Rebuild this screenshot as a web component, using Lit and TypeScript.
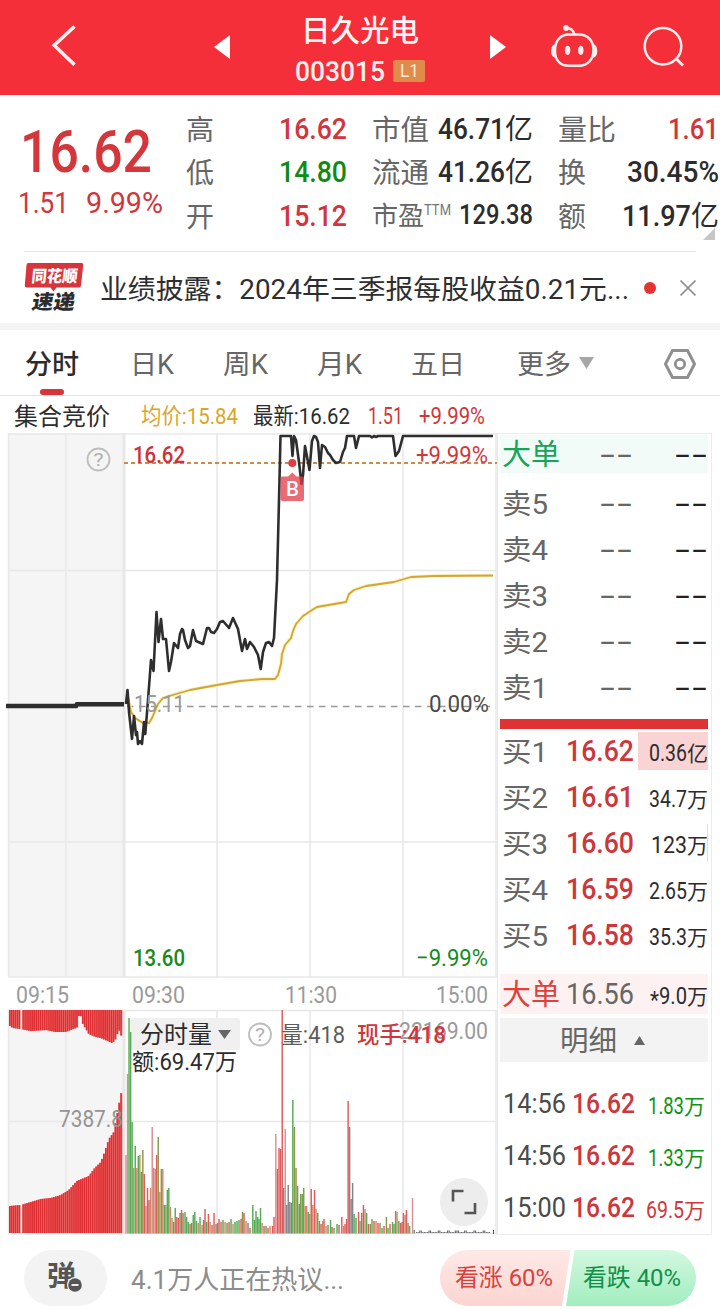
import { LitElement, html, svg, css, nothing } from "lit";
import { customElement } from "lit/decorators.js";

type Pt = [number, number];

const RED = "#d0363c";
const GREEN = "#0f8a12";
const DARK = "#2c2c2e";
const GREY = "#666";
const MUTE = "#9a9a9a";

/** In-flow text set to an exact advance width. */
const fit = (text: string, w: number, size: number, fill: string, weight = 400, mid = 0.32) => html`
  <svg class="fit" width=${w} height=${size} role="text">
    <text x="0" y=${size / 2 + size * mid} font-size=${size} fill=${fill} font-weight=${weight}
      textLength=${w} lengthAdjust="spacingAndGlyphs">${text}</text>
  </svg>`;
const cjk = (text: string, w: number, size: number, fill: string, weight = 400) =>
  fit(text, w, size, fill, weight, 0.36);

/** Text on the chart canvas: x is the left edge, cy the vertical middle of the digits. */
const label = (x: number, cy: number, text: string, w: number, size: number, fill: string, weight = 400) => svg`
  <text x=${x} y=${cy + size * 0.33} font-size=${size} fill=${fill} font-weight=${weight}
    textLength=${w} lengthAdjust="spacingAndGlyphs">${text}</text>`;

const poly = (pts: Pt[]) => pts.map((p) => p.join(",")).join(" ");

const lerp = (pts: Pt[], x: number) => {
  for (let i = 1; i < pts.length; i++) {
    const [x0, y0] = pts[i - 1];
    const [x1, y1] = pts[i];
    if (x <= x1) return y0 + ((y1 - y0) * (x - x0)) / (x1 - x0);
  }
  return pts[pts.length - 1][1];
};

const PRICE: Pt[] = [
  [126, 704], [127.5, 690], [129, 712], [132, 739], [134, 716], [136, 735], [137, 732], [138, 744], [140, 741],
  [142, 744], [144, 722], [145.3, 734], [148, 700], [151, 660], [153.5, 671], [156.5, 612], [158.5, 642],
  [161, 619], [163, 639], [166, 639], [169, 671], [171, 662], [174, 643], [178, 648], [180, 634], [182, 629],
  [183, 630], [185, 640], [188, 648], [190, 646], [193, 630], [196, 641], [203, 644], [205, 636], [207, 628], [209, 628],
  [211, 632], [214, 633], [217, 629], [220, 622], [223, 621], [229, 628], [233, 618], [238, 629], [242, 651], [245, 639],
  [247, 649], [250, 642], [254, 647], [258, 655], [260.7, 669], [263, 652], [266, 643], [269, 642], [272, 646],
  [274, 638], [277, 580], [279, 500], [280.5, 436], [291, 436], [292.5, 456], [294, 436], [296, 440],
  [299, 462], [301.5, 484], [303, 475], [305, 446], [309.5, 470], [312, 441], [314, 436], [316, 437], [318, 442],
  [320, 468], [322, 445], [325, 447], [328, 453], [330, 455], [333, 460], [336, 463], [340, 462], [343, 452], [345, 448],
  [347, 436], [354, 436], [356, 448], [359, 436], [370, 436], [372, 437.5], [374, 436], [376, 437], [378, 436],
  [393, 436], [395.5, 456], [399, 451], [403, 436], [493, 436],
];

const AVERAGE: Pt[] = [
  [127, 690], [129, 702], [131, 712], [135, 718], [143, 723], [149, 723], [152, 718], [155, 711], [158, 704],
  [163, 698], [176, 694], [190, 690], [217, 685], [240, 681], [262, 679], [275, 679], [278, 675], [281, 664],
  [282, 654], [285, 645], [291, 638], [293, 631], [296, 624], [303, 616], [312, 610], [317, 607], [346, 602],
  [349, 594], [354, 590], [366, 586], [394, 582], [411, 577], [433, 576], [493, 575.5],
];

const AUCTION_TOP: Pt[] = [
  [9, 1026], [12, 1028], [20, 1029], [30, 1031], [45, 1030], [55, 1032], [65, 1032], [75, 1028], [77, 1027],
  [78, 1016], [80, 1016], [82, 1024], [88, 1034], [95, 1037], [100, 1038], [111, 1043], [114, 1041],
  [118, 1030], [120, 1033], [121, 1040], [122, 1048],
];

const AUCTION_BOTTOM: Pt[] = [
  [9, 1206], [20, 1205], [30, 1202], [40, 1199], [50, 1198], [60, 1195], [68, 1190], [76, 1181], [88, 1176],
  [93, 1169], [100, 1162], [103, 1154], [108, 1139], [113, 1132], [118, 1105], [120, 1095], [122, 1085],
];

const TONE: Record<string, string> = {
  r: "#df5c5c", p: "#d98f95", g: "#57ab55", s: "#d28a66", k: "#85858a", o: "#8f9548",
};

const VOLUME: [number, number, string][] = [
  [126, 1155, "p"], [127.5, 1074, "p"], [129, 1018, "g"], [130.6, 1032, "g"], [132.1, 1122, "g"], [133.6, 1168, "s"],
  [135.2, 1146, "g"], [136.8, 1168, "s"], [138.3, 1156, "g"], [139.8, 1155, "s"], [141.3, 1172, "g"], [142.8, 1150, "o"],
  [144.3, 1174, "r"], [145.9, 1206, "s"], [147.5, 1188, "r"], [149, 1200, "r"], [150.6, 1188, "s"], [152.2, 1127, "p"],
  [153.7, 1168, "s"], [155.2, 1169, "s"], [156.7, 1155, "r"], [158.2, 1137, "o"], [159.8, 1192, "s"], [161.3, 1169, "o"],
  [162.8, 1169, "s"], [164.3, 1205, "g"], [165.8, 1205, "s"], [167.3, 1190, "g"], [168.8, 1188, "g"], [170.4, 1207, "s"],
  [172, 1218, "s"], [173.6, 1222, "r"], [175.2, 1208, "g"], [176.8, 1217, "r"], [178.4, 1218, "r"], [180, 1213, "g"],
  [181.5, 1210, "r"], [183, 1213, "r"], [185, 1212, "g"], [186.6, 1217, "g"], [188.2, 1222, "g"], [190, 1224, "r"],
  [191.6, 1223, "r"], [193.2, 1215, "g"], [194.8, 1212, "g"], [196.5, 1221, "g"], [198.2, 1223, "s"], [200, 1217, "g"],
  [202, 1225, "s"], [203.5, 1220, "r"], [205, 1209, "r"], [206.7, 1222, "g"], [208.4, 1214, "r"], [210, 1222, "s"],
  [212, 1225, "r"], [214, 1213, "r"], [216, 1224, "g"], [217.5, 1223, "r"], [219, 1219, "r"], [221, 1222, "r"],
  [223, 1220, "g"], [225, 1222, "s"], [227, 1223, "g"], [229, 1222, "r"], [231, 1219, "g"], [233, 1224, "s"],
  [235, 1222, "g"], [237, 1221, "g"], [239, 1220, "g"], [241, 1219, "r"], [242.5, 1212, "o"], [244, 1213, "r"],
  [246, 1221, "s"], [248, 1223, "k"], [250, 1228, "r"], [252.8, 1205, "g"], [254.5, 1220, "g"], [256, 1211, "g"],
  [257.6, 1217, "g"], [259, 1219, "g"], [260.5, 1208, "g"], [262, 1223, "s"], [264, 1226, "r"], [266, 1226, "g"],
  [268, 1228, "r"], [270, 1226, "s"], [272.5, 1226, "r"], [274, 1217, "r"], [275.8, 1134, "p"], [277.4, 1169, "r"],
  [279, 1148, "r"], [280.6, 1149, "r"], [282.2, 1010, "r"], [283.7, 1188, "k"], [285.2, 1129, "p"], [286.7, 1205, "k"],
  [288.2, 1185, "k"], [289.8, 1202, "k"], [291.3, 1203, "k"], [292.8, 1100, "g"], [294.4, 1127, "o"], [296, 1168, "o"],
  [297.6, 1186, "g"], [299.2, 1204, "g"], [300.7, 1194, "o"], [302.2, 1194, "g"], [303.7, 1188, "o"], [305.2, 1206, "s"],
  [306.7, 1206, "s"], [308.2, 1212, "g"], [309.7, 1214, "s"], [311.2, 1189, "r"], [312.8, 1205, "s"], [314.5, 1190, "r"],
  [316, 1209, "s"], [317.7, 1213, "g"], [319.4, 1221, "g"], [321, 1224, "r"], [322.6, 1221, "s"], [324, 1219, "r"],
  [326, 1226, "s"], [328, 1225, "g"], [330.5, 1220, "g"], [332, 1227, "r"], [334, 1228, "g"], [337, 1224, "g"],
  [339, 1225, "r"], [341.8, 1217, "r"], [343.5, 1226, "s"], [345, 1224, "r"], [346.6, 1219, "r"], [348.1, 1101, "r"],
  [349.6, 1127, "k"], [351.1, 1199, "k"], [352.6, 1183, "k"], [354.1, 1214, "g"], [356, 1218, "g"], [358.5, 1212, "r"],
  [360, 1221, "g"], [361.7, 1213, "r"], [363.4, 1205, "r"], [365, 1209, "s"], [366.6, 1213, "g"], [368.4, 1224, "r"],
  [370.3, 1224, "g"], [372, 1219, "o"], [374, 1221, "r"], [376, 1221, "s"], [378, 1223, "r"], [380, 1223, "o"],
  [382, 1228, "g"], [384, 1226, "r"], [386.4, 1217, "o"], [388, 1228, "g"], [390, 1224, "r"], [392.5, 1222, "g"],
  [394, 1224, "g"], [395.6, 1211, "o"], [397, 1212, "s"], [398.8, 1221, "g"], [400.5, 1223, "r"], [402, 1222, "r"],
  [403.4, 1213, "r"], [405, 1215, "s"], [406.4, 1210, "r"], [408, 1223, "o"], [409.6, 1226, "g"], [412.5, 1198, "p"],
  [414.2, 1230, "k"],
];

const QUOTE = [
  [
    { k: "高", kw: 28, v: "16.62", w: 68, c: RED, u: "" },
    { k: "低", kw: 28, v: "14.80", w: 68, c: GREEN, u: "" },
    { k: "开", kw: 28, v: "15.12", w: 68, c: RED, u: "" },
  ],
  [
    { k: "市值", kw: 57, v: "46.71", w: 67, c: DARK, u: "亿" },
    { k: "流通", kw: 57, v: "41.26", w: 67, c: DARK, u: "亿" },
    { k: "市盈", kw: 52, v: "129.38", w: 74, c: DARK, u: "" },
  ],
  [
    { k: "量比", kw: 58, v: "1.61", w: 51, c: RED, u: "" },
    { k: "换", kw: 28, v: "30.45%", w: 92, c: DARK, u: "" },
    { k: "额", kw: 28, v: "11.97", w: 69, c: DARK, u: "亿" },
  ],
];

const BIDS = [
  { p: "16.62", q: "0.36", w: 38, u: "亿", share: 70 },
  { p: "16.61", q: "34.7", w: 38, u: "万", share: 0 },
  { p: "16.60", q: "123", w: 36, u: "万", share: 1.5 },
  { p: "16.59", q: "2.65", w: 38, u: "万", share: 0 },
  { p: "16.58", q: "35.3", w: 38, u: "万", share: 0 },
];

const TRADES = [
  { t: "14:56", q: "1.83", w: 36, c: "#0e9414" },
  { t: "14:56", q: "1.33", w: 36, c: "#0e9414" },
  { t: "15:00", q: "69.5", w: 38, c: RED },
];

const sharedText = css`
  :host { display: block; font-family: Roboto, "Noto Sans CJK SC", sans-serif; }
  svg { display: block; flex: none; overflow: visible; font-family: Roboto, "Noto Sans CJK SC", sans-serif; }
`;

@customElement("title-bar")
class TitleBar extends LitElement {
  static styles = [sharedText, css`
    .bar { height: 95px; background: #f42f39; display: flex; align-items: flex-start; }
    .back { margin: 24px 0 0 51px; }
    .prev { margin: 35px 0 0 137px; }
    .name { width: 260px; display: flex; flex-direction: column; align-items: center; padding-top: 16px; }
    .code { display: flex; gap: 8px; margin-top: 12px; align-items: center; }
    .badge { width: 32px; height: 22px; border-radius: 2px; background: #e08b4c; display: flex; align-items: center; justify-content: center; }
    .next { margin: 35px 0 0 0; }
    .bot { margin: 22px 0 0 44px; }
    .search { margin: 24px 0 0 45px; }
  `];
  render() {
    return html`<div class="bar">
      <svg class="back" width="26" height="43"><path d="M23.5 2.5L3.2 21.3L23.5 40.8" fill="none" stroke="#fff0ee" stroke-width="3.6"/></svg>
      <svg class="prev" width="16" height="24"><path d="M16 0V24L0 12Z" fill="#fff"/></svg>
      <div class="name">
        ${cjk("日久光电", 118, 29.5, "#fff4f2", 500)}
        <div class="code">${fit("003015", 90, 27, "#fff0ee", 500, 0.35)}<span class="badge">${fit("L1", 19, 18, "#ffe9d2", 400, 0.35)}</span></div>
      </div>
      <svg class="next" width="16" height="24"><path d="M0 0V24L16 12Z" fill="#fff"/></svg>
      <svg class="bot" width="48" height="48" viewBox="550 22 48 48">
        <g fill="none" stroke="#fff0ee" stroke-width="2.5">
          <path d="M569 34.5H579C588 34.5 593.5 41 593.5 50S588 65.8 579 65.8H569C560 65.8 555 60 555 50.5S560 34.5 569 34.5Z"/>
          <path d="M566 28Q573 28 574 34" stroke-linecap="round"/>
        </g>
        <g fill="#fff0ee"><circle cx="566" cy="28" r="2.9"/><ellipse cx="567.6" cy="50.3" rx="2.7" ry="4.6"/><ellipse cx="580.8" cy="50.3" rx="2.7" ry="4.6"/>
        <path d="M555.5 44Q551 45 551 51T556 58ZM593 44Q597.3 45 597.3 51T592.5 58Z"/></g>
      </svg>
      <svg class="search" width="42" height="44" viewBox="643 24 42 44">
        <circle cx="663" cy="46.2" r="18.3" fill="none" stroke="#fff0ee" stroke-width="2.5"/>
        <path d="M676 58.5L683 65.5" stroke="#fff0ee" stroke-width="2.8"/>
      </svg>
    </div>`;
  }
}

@customElement("quote-panel")
class QuotePanel extends LitElement {
  static styles = [sharedText, css`
    .panel { display: flex; height: 156px; position: relative; overflow: hidden; }
    .last { width: 186px; }
    .big { padding: 28px 0 0 20px; }
    .diff { display: flex; gap: 17px; padding: 6px 0 0 18px; }
    .cols { display: flex; padding-top: 12px; gap: 25px; }
    .col { width: 161px; }
    .cell { height: 43.5px; display: flex; align-items: center; justify-content: space-between; }
    .key, .val { display: flex; align-items: center; }
    .sup { align-self: flex-start; margin-top: 1px; }
    .fold { position: absolute; right: 5px; top: 133px; }
  `];
  render() {
    return html`<div class="panel">
      <div class="last">
        <div class="big">${fit("16.62", 132, 60, "#d3373b", 500)}</div>
        <div class="diff">${fit("1.51", 51, 29, RED)}${fit("9.99%", 77, 29, RED)}</div>
      </div>
      <div class="cols">${QUOTE.map((col) => html`<div class="col">${col.map((c) => html`
        <div class="cell">
          <span class="key">${cjk(c.k, c.kw, c.k === "市盈" ? 26 : 28.5, GREY)}
            ${c.k === "市盈" ? html`<span class="sup">${fit("TTM", 27, 14, "#777")}</span>` : nothing}</span>
          <span class="val">${fit(c.v, c.w, c.v === "129.38" ? 27 : 30, c.c, 500)}${c.u ? cjk(c.u, 28, 28, c.c) : nothing}</span>
        </div>`)}</div>`)}</div>
      <svg class="fold" width="12" height="12"><path d="M12 0V12H0Z" fill="#c6c6c6"/></svg>
    </div>`;
  }
}

@customElement("news-strip")
class NewsStrip extends LitElement {
  static styles = [sharedText, css`
    .strip { margin: 0 24px; height: 72px; box-sizing: border-box; border-top: 1px solid #e8e8e8; display: flex; align-items: center; }
    .logo { margin-top: -1px; }
    .head { margin: 3px 0 0 16px; }
    .dot { width: 12px; height: 12px; border-radius: 50%; background: #e53232; margin: 0 24px 0 15px; }
    .band { height: 7px; background: #f4f4f5; }
  `];
  render() {
    return html`<div class="strip">
      <svg class="logo" width="60" height="50" viewBox="24 262 60 50">
        <path d="M28.5 263H81.5Q83.5 263 83.2 265L81 285.5Q80.8 287.5 79 287.5H56.5L53.5 291.5L50.5 287.5H26.5Q24.5 287.5 24.8 285.5L26.5 265Q26.7 263 28.5 263Z" fill="#d8343b"/>
        <text x="0" y="0" transform="translate(31 281.5) skewX(-6)" font-size="16.5" font-weight="900" fill="#fff" textLength="46" lengthAdjust="spacingAndGlyphs">同花顺</text>
        <text x="0" y="0" transform="translate(31 308.5) skewX(-10)" font-size="20" font-weight="900" fill="#2c2c30" textLength="43" lengthAdjust="spacingAndGlyphs">速递</text>
      </svg>
      <div class="head">${cjk("业绩披露：2024年三季报每股收益0.21元...", 529, 27.5, "#2e2e30")}</div>
      <span class="dot"></span>
      <svg width="16" height="16"><path d="M0.5 0.5L15.5 15.5M15.5 0.5L0.5 15.5" stroke="#8c8c8c" stroke-width="1.7"/></svg>
    </div><div class="band"></div>`;
  }
}

@customElement("period-tabs")
class PeriodTabs extends LitElement {
  static styles = [sharedText, css`
    .tabs { height: 66px; box-sizing: border-box; border-bottom: 1px solid #e2e2e2; display: grid; grid-template-columns: 105px 93px 94px 94px 106px 147px 32px; padding-left: 25px; }
    .tab { display: flex; align-items: center; gap: 8px; padding-top: 4px; position: relative; }
    .mark { position: absolute; left: 15px; bottom: 0; width: 24px; height: 6px; border-radius: 3px; background: #d8343b; }
    .gear { padding-top: 2px; }
    .drop { margin-top: -4px; }
  `];
  render() {
    const tabs: [string, number][] = [["分时", 54], ["日K", 44], ["周K", 45], ["月K", 45], ["五日", 54], ["更多", 54]];
    return html`<div class="tabs">${tabs.map(([t, w], i) => html`<span class="tab">
        ${cjk(t, w, 27, i ? GREY : DARK, i ? 400 : 500)}
        ${i === 0 ? html`<span class="mark"></span>` : nothing}
        ${i === 5 ? html`<svg class="drop" width="15" height="12"><path d="M0 0H15L7.5 12Z" fill="#a6a6a6"/></svg>` : nothing}
      </span>`)}
      <span class="tab gear"><svg width="32" height="30" viewBox="664 348 32 30">
        <path d="M672.5 349.5H687.5L694.5 363L687.5 376.5H672.5L665.5 363Z" fill="none" stroke="#8f8f8f" stroke-width="3" stroke-linejoin="round"/>
        <circle cx="680" cy="363" r="4.7" fill="none" stroke="#8f8f8f" stroke-width="2.8"/></svg></span>
    </div>`;
  }
}

@customElement("trend-chart")
class TrendChart extends LitElement {
  static styles = [sharedText];

  private auction() {
    const bars = [];
    for (let x = 9; x < 122; x += 1.92) {
      if (x > 19.5 && x < 21.5) continue;
      const top = lerp(AUCTION_TOP, x);
      const low = lerp(AUCTION_BOTTOM, x);
      bars.push(svg`<rect x=${x} y="1010" width="1.92" height=${top - 1010} fill="#f05a58"/>
        <rect x=${x} y="1010" width="1.35" height=${top - 1010} fill="#dd2f33"/>
        <rect x=${x} y=${low} width="1.92" height=${1233 - low} fill="#f05a58"/>
        <rect x=${x} y=${low} width="1.35" height=${1233 - low} fill="#dd2f33"/>`);
    }
    return bars;
  }

  private tail() {
    const ticks = [];
    for (let x = 416; x < 490; x += 1.55) {
      const h = 1 + ((x * 7) % 5 > 3.2 ? 1.5 : 0);
      ticks.push(svg`<rect x=${x} y=${1233 - h} width="1.2" height=${h} fill="#6d6d72"/>`);
    }
    return ticks;
  }

  render() {
    return html`<svg width="497" height="802" viewBox="0 433 497 802">
      <rect x="8" y="433" width="116" height="544" fill="#f5f5f5"/>
      <rect x="8" y="1010" width="116" height="223" fill="#f5f5f5"/>
      <g stroke="#e8e8e8" stroke-width="1.5">
        ${[434, 570.5, 842, 977, 1010.5, 1121.5].map((y) => svg`<path d="M8 ${y}H496.5"/>`)}
        <path d="M8 706H124M8 1233.5H497"/>
        ${[8.5, 66, 217, 310, 403, 496].map((x) => svg`<path d="M${x} 433V977M${x} 1010V1233"/>`)}
        <path d="M124 433V977M124 1010V1233" stroke-width="3"/>
      </g>
      <circle cx="98.500" cy="459.500" r="11" fill="none" stroke="#bdbdbd" stroke-width="1.8"/>
      ${label(93.5, 460, "?", 10, 18, "#b0b0b0")}

      <path d="M124 463H497" stroke="#d08a48" stroke-width="1.8" stroke-dasharray="4 3"/>
      ${label(133, 455.5, "16.62", 52, 24, "#cf3038", 500)}
      ${label(416, 455.5, "+9.99%", 72, 24, "#d0363c")}
      <path d="M127 706.5H490" stroke="#999" stroke-width="1.5" stroke-dasharray="6.500 5.500"/>
      <polyline points=${poly(AVERAGE)} fill="none" stroke="#fff0b8" stroke-width="3.6" stroke-linejoin="round"/>
      <polyline points=${poly(AVERAGE)} fill="none" stroke="#cfa53c" stroke-width="1.8" stroke-linejoin="round"/>
      <polyline points="6,706 76,706 77,704.300 124,704.300" fill="none" stroke="#2e2e2e" stroke-width="4.500"/>
      <polyline points=${poly(PRICE)} fill="none" stroke="#2e2e2e" stroke-width="2.6" stroke-linejoin="round"/>
      ${label(134, 704.5, "15.11", 51, 24, MUTE)}
      ${label(429, 704.5, "0.00%", 60, 24, "#4a4a4a")}
      <circle cx="292.300" cy="463" r="4" fill="#e03c42"/>
      <path d="M282 476.500H288L292.300 472.500L296.500 476.500H302.500Q304 476.500 304 478V499Q304 501 302 501H282.500Q280.500 501 280.500 499V478Q280.500 476.500 282 476.500Z" fill="#e23a46" fill-opacity=".75"/>
      ${label(286, 489, "B", 13, 21, "#fff", 500)}
      ${label(133, 958, "13.60", 52, 24, "#178a1c", 500)}
      ${label(416, 958, "−9.99%", 72, 24, "#178a1c")}

      ${label(16, 995, "09:15", 53, 24, MUTE)}
      ${label(132, 995, "09:30", 53, 24, MUTE)}
      ${label(285, 995, "11:30", 52, 24, MUTE)}
      ${label(436, 995, "15:00", 52, 24, MUTE)}

      ${this.auction()}
      ${label(59, 1119, "7387.8", 64, 24, "#949494")}
      <rect x="130" y="1018" width="110" height="32" rx="3" fill="#f0f0f0"/>
      ${VOLUME.map(([x, y, c]) => svg`<rect x=${x - 0.7} y=${y} width="1.45" height=${1233.5 - y} fill=${TONE[c]}/>`)}
      ${this.tail()}
      <path d="M493.500 1230V1234" stroke="#555" stroke-width="1"/>
      ${label(140, 1035, "分时量", 72, 24, DARK)}
      <path d="M218 1030H231L224.500 1039Z" fill="#666"/>
      <circle cx="260" cy="1034.500" r="11" fill="none" stroke="#bdbdbd" stroke-width="1.8"/>
      ${label(255, 1035, "?", 10, 18, "#b0b0b0")}
      ${label(281, 1035, "量:418", 64, 23, "#5c5c5c")}
      ${label(399, 1031, "22169.00", 89, 24, MUTE)}
      ${label(357, 1035, "现手:418", 89, 23, RED, 500)}
      ${label(132, 1062, "额:69.47万", 105, 23, DARK)}
      <circle cx="464" cy="1202" r="24" fill="#ededed"/>
      <path d="M453 1201.500V1191H463.500M475 1203V1213H464.500" fill="none" stroke="#555" stroke-width="2.600"/>
    </svg>`;
  }
}

@customElement("order-book")
class OrderBook extends LitElement {
  static styles = [sharedText, css`
    .book { width: 215px; height: 802px; box-sizing: border-box; border: 1px solid #ececec; border-left-color: #e8e8e8; padding: 1px 3px 0 2px; overflow: hidden; }
    .row { display: grid; grid-template-columns: 64px 1fr auto; align-items: center; height: 46px; padding-left: 2px; box-sizing: border-box; }
    .row.ask { grid-template-columns: 97px 1fr auto; padding-right: 2px; }
    .row.total { height: 38px; background: #f2fbf7; }
    .row.total.buy { height: 40px; background: #fdf2f1; margin-top: 16px; }
    .asks { padding-top: 7px; }
    .split { height: 10px; background: #e03133; margin-top: 9px; }
    .bids { margin-top: -1px; }
    .qty { display: flex; align-items: center; justify-content: flex-end; height: 38px; padding-top: 4px; box-sizing: border-box; position: relative; }
    .fill { position: absolute; right: 0; top: 0; height: 38px; background: #fad3d4; }
    .num { display: flex; align-items: center; position: relative; }
    .detail { height: 44px; background: #f3f3f3; margin-top: 4px; display: flex; align-items: center; justify-content: center; gap: 17px; padding-right: 3px; }
    .trades { padding-top: 16px; }
    .row.trade { height: 52px; grid-template-columns: 69px 1fr auto; padding: 0 3px 0 3px; }
  `];
  private dashes(c: string) {
    return html`<svg width="32" height="20"><text x="0" y="19.500" font-family="Liberation Sans" font-size="30" fill=${c} textLength="34" lengthAdjust="spacingAndGlyphs">--</text></svg>`;
  }
  render() {
    return html`<div class="book">
      <div class="row ask total">${cjk("大单", 58, 29, "#14a558")}${this.dashes("#666")}${this.dashes("#222")}</div>
      <div class="asks">${[5, 4, 3, 2, 1].map((n) => html`<div class="row ask">
        ${cjk(`卖${n}`, 46, 28.5, GREY)}${this.dashes("#666")}${this.dashes("#222")}</div>`)}</div>
      <div class="split"></div>
      <div class="bids">${BIDS.map((b, i) => html`<div class="row">
        ${cjk(`买${i + 1}`, 46, 28.5, GREY)}${fit(b.p, 68, 30, "#cc373d", 500)}
        <span class="qty">${b.share ? html`<span class="fill" style="width:${b.share}px"></span>` : nothing}
          <span class="num">${fit(b.q, b.w, 23, DARK)}${cjk(b.u, 21, 21, DARK)}</span></span>
      </div>`)}</div>
      <div class="row total buy">${cjk("大单", 58, 29, "#e0403c")}${fit("16.56", 68, 30, "#666")}
        <span class="qty"><span class="num">${fit("*", 9, 24, DARK, 400, 0.5)}${fit("9.0", 28, 23, DARK)}${cjk("万", 21, 21, DARK)}</span></span></div>
      <div class="detail">${cjk("明细", 57, 28.5, GREY)}<svg width="11" height="9"><path d="M0 9L5.5 0L11 9Z" fill="#666"/></svg></div>
      <div class="trades">${TRADES.map((t) => html`<div class="row trade">
        ${fit(t.t, 63, 28.5, "#4b4b4b")}${fit("16.62", 63, 28.5, "#cc373d", 500)}
        <span class="qty"><span class="num">${fit(t.q, t.w, 23, t.c)}${cjk("万", 21, 21, t.c)}</span></span>
      </div>`)}</div>
    </div>`;
  }
}

@customElement("chat-footer")
class ChatFooter extends LitElement {
  static styles = [sharedText, css`
    .foot { height: 74px; display: flex; padding: 15px 24px 0; box-sizing: border-box; }
    .danmu { width: 83px; height: 56px; border-radius: 28px; background: #f3f3f3; display: flex; align-items: center; justify-content: center; }
    .hint { margin-left: 24px; height: 60px; display: flex; align-items: center; width: 309px; }
  `];
  render() {
    return html`<div class="foot">
      <span class="danmu"><svg width="36" height="32" viewBox="47 1262 36 32">
        <text x="46" y="1286" font-size="28" font-weight="700" fill="#555" textLength="29" lengthAdjust="spacingAndGlyphs">弹</text>
        <circle cx="74" cy="1285" r="8" fill="#f3f3f3"/><circle cx="74" cy="1285" r="6.800" fill="#555"/><path d="M70.500 1285H77.500" stroke="#fff" stroke-width="1.800"/></svg></span>
      <span class="hint">${cjk("4.1万人正在热议...", 213, 26, "#8c8c8c")}</span>
      <svg width="256" height="56" viewBox="440 1250 256 56">
        <defs>
          <linearGradient id="up" x1="0" y1="0" x2="0" y2="1"><stop offset="0" stop-color="#fee9e7"/><stop offset="1" stop-color="#fcd5d0"/></linearGradient>
          <linearGradient id="down" x1="0" y1="0" x2="0" y2="1"><stop offset="0" stop-color="#d2f8df"/><stop offset="1" stop-color="#a2edbf"/></linearGradient>
        </defs>
        <path d="M468 1250H570.500L562 1306H468A28 28 0 0 1 468 1250Z" fill="url(#up)"/>
        <path d="M574.500 1250H668A28 28 0 0 1 668 1306H566Z" fill="url(#down)"/>
        ${label(455, 1278.5, "看涨 60%", 98, 23.5, "#d8413e")}
        ${label(583, 1278.5, "看跌 40%", 98, 23.5, "#12904a")}
      </svg>
    </div>`;
  }
}

@customElement("app-root")
class AppRoot extends LitElement {
  static styles = [sharedText, css`
    :host { width: 720px; height: 1309px; overflow: hidden; background: #fff; }
    .info { height: 37px; display: flex; align-items: center; padding: 3px 0 0 14px; box-sizing: border-box; }
    .avg { margin-left: 31px; }
    .new { margin-left: 15px; }
    .chg { margin-left: 18px; }
    .pct { margin-left: 16px; }
    .main { display: flex; }
  `];
  render() {
    return html`
      <title-bar></title-bar>
      <quote-panel></quote-panel>
      <news-strip></news-strip>
      <period-tabs></period-tabs>
      <div class="info">
        ${cjk("集合竞价", 96, 24, DARK)}
        <span class="avg">${cjk("均价:15.84", 97, 22.5, "#dba52a")}</span>
        <span class="new">${cjk("最新:16.62", 97, 22.5, DARK)}</span>
        <span class="chg">${fit("1.51", 35, 23, RED)}</span>
        <span class="pct">${fit("+9.99%", 66, 23, RED)}</span>
      </div>
      <div class="main"><trend-chart></trend-chart><order-book></order-book></div>
      <chat-footer></chat-footer>`;
  }
}
